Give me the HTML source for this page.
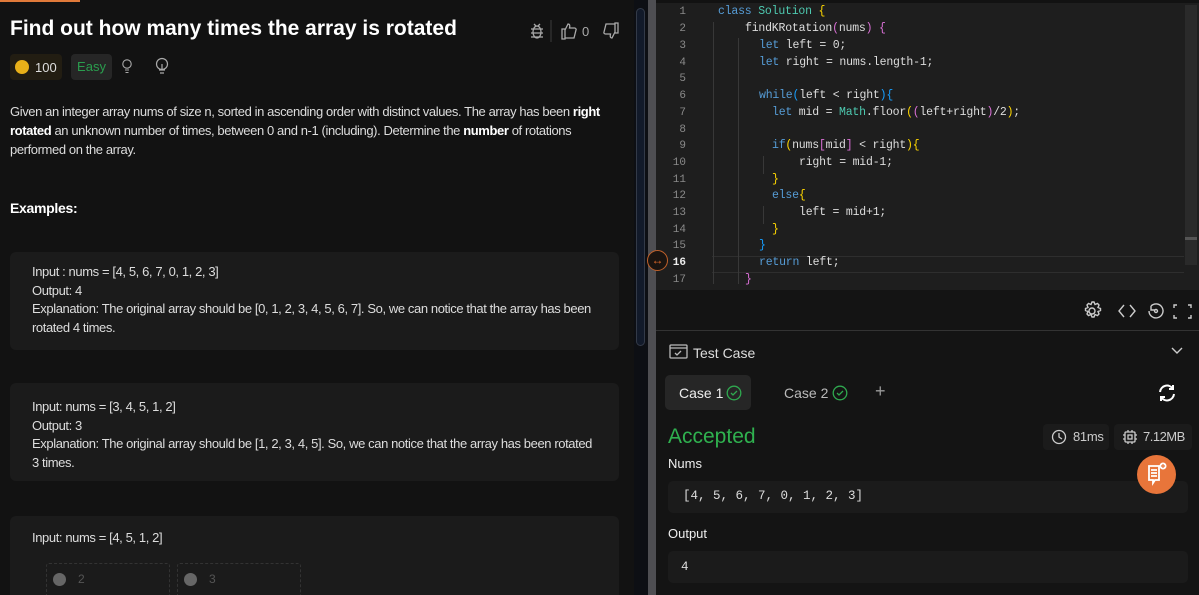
<!DOCTYPE html>
<html><head><meta charset="utf-8"><style>
*{margin:0;padding:0;box-sizing:border-box}
html,body{width:1199px;height:595px;overflow:hidden}
body{background:#121212;font-family:"Liberation Sans",sans-serif;color:#e6e6e6;position:relative}
.a{position:absolute}
.mono{font-family:"Liberation Mono",monospace}
.card{position:absolute;left:10px;width:609px;background:#1b1b1b;border-radius:6px;font-size:13px;line-height:18.5px;color:#ddd;padding-left:22px;padding-right:25px;letter-spacing:-0.4px}
.ln{position:absolute;left:656px;width:30px;text-align:right;font-family:"Liberation Mono",monospace;font-size:11px;color:#8a8a8a}
.cl{position:absolute;font-family:"Liberation Mono",monospace;font-size:11.5px;color:#ddd;white-space:pre;letter-spacing:-0.2px}
.k{color:#569cd6}.t{color:#4ec9b0}.y{color:#ffd700}.p{color:#da70d6}.b{color:#179fff}
</style></head><body>
<div class="a" style="left:0;top:0;width:80px;height:2px;background:#e07a3a"></div>
<div class="a" style="left:10px;top:17px;font-size:21px;font-weight:bold;color:#fff">Find out how many times the array is rotated</div>
<svg class="a" style="left:528px;top:20px" width="100" height="22" viewBox="0 0 100 22" fill="none" stroke="#aaa" stroke-width="1.3">
<ellipse cx="9" cy="12" rx="4" ry="6"/><path d="M3 9h12M3 13h12M3 17h12M6 4l2 2M12 4l-2 2"/>
<path d="M23 0v22" stroke="#333"/>
<path d="M34 9h3v10h-3zM37 10l3-6c2 0 2 2 1.5 4h5c1 0 2 1 1.5 2l-2 8h-9"/>
<text x="54" y="16" fill="#aaa" stroke="none" font-size="13" font-family="Liberation Sans">0</text>
<path d="M87 13h3V3h-3zM87 12l-3 6c-2 0-2-2-1.5-4h-5c-1 0-2-1-1.5-2l2-8h9"/>
</svg>
<div class="a" style="left:10px;top:54px;width:52px;height:26px;background:#221d12;border-radius:4px"></div>
<div class="a" style="left:15px;top:60px;width:14px;height:14px;border-radius:50%;background:#e8b019"></div>
<div class="a" style="left:35px;top:60px;font-size:13px;color:#ddd">100</div>
<div class="a" style="left:71px;top:54px;width:41px;height:26px;background:#262626;border-radius:4px;color:#2a9d4e;font-size:13px;text-align:center;line-height:26px">Easy</div>
<svg class="a" style="left:121px;top:58px" width="12" height="18" fill="none" stroke="#aaa" stroke-width="1.1"><circle cx="6" cy="6" r="4.2"/><path d="M4 12h4M4.5 14.5h3"/></svg>
<svg class="a" style="left:154px;top:57px" width="16" height="20" fill="none" stroke="#aaa" stroke-width="1.2"><circle cx="8" cy="7" r="5.5"/><path d="M5 13h6M6 16h4M8 7v5"/></svg>
<div class="a" style="left:10px;top:102px;width:600px;font-size:13px;line-height:19px;color:#ddd;letter-spacing:-0.4px">Given an integer array nums of size n, sorted in ascending order with distinct values. The array has been <b style="color:#fff">right rotated</b> an unknown number of times, between 0 and n-1 (including). Determine the <b style="color:#fff">number</b> of rotations performed on the array.</div>
<div class="a" style="left:10px;top:200px;font-size:14px;font-weight:bold;color:#fff;letter-spacing:-0.3px">Examples:</div>
<div class="card" style="top:252px;height:98px;padding-top:11px">Input : nums = [4, 5, 6, 7, 0, 1, 2, 3]<br>Output: 4<br>Explanation: The original array should be [0, 1, 2, 3, 4, 5, 6, 7]. So, we can notice that the array has been rotated 4 times.</div>
<div class="card" style="top:383px;height:98px;padding-top:15px">Input: nums = [3, 4, 5, 1, 2]<br>Output: 3<br>Explanation: The original array should be [1, 2, 3, 4, 5]. So, we can notice that the array has been rotated 3 times.</div>
<div class="card" style="top:516px;height:90px;padding-top:13px">Input: nums = [4, 5, 1, 2]</div>
<div class="a" style="left:46px;top:563px;width:124px;height:40px;border:1px dashed #333;border-radius:3px"></div>
<div class="a" style="left:177px;top:563px;width:124px;height:40px;border:1px dashed #333;border-radius:3px"></div>
<div class="a" style="left:53px;top:573px;width:13px;height:13px;border-radius:50%;background:#666"></div>
<div class="a" style="left:78px;top:572px;font-size:12px;color:#555">2</div>
<div class="a" style="left:184px;top:573px;width:13px;height:13px;border-radius:50%;background:#666"></div>
<div class="a" style="left:209px;top:572px;font-size:12px;color:#555">3</div>
<div class="a" style="left:634px;top:0;width:14px;height:595px;background:#0d0f14"></div>
<div class="a" style="left:636px;top:8px;width:9px;height:338px;background:#121a2a;border:1px solid #333a48;border-radius:5px"></div>
<div class="a" style="left:648px;top:0;width:8px;height:595px;background:#4e4e52"></div>
<div class="a" style="left:656px;top:0;width:543px;height:290px;background:#1e1e1e"></div>
<div class="a" style="left:656px;top:0;width:543px;height:3px;background:#121212"></div>
<div class="a" style="left:1185px;top:5px;width:12px;height:260px;background:#2a2a2a"></div>
<div class="a" style="left:1185px;top:237px;width:12px;height:3px;background:#555"></div>
<div class="a" style="left:712px;top:256px;width:472px;height:17px;border-top:1px solid #2e2e2e;border-bottom:1px solid #2e2e2e"></div>
<div class="a" style="left:713px;top:22px;width:1px;height:262px;background:#383838"></div>
<div class="a" style="left:738px;top:38px;width:1px;height:246px;background:#383838"></div>
<div class="a" style="left:763px;top:156px;width:1px;height:18px;background:#383838"></div>
<div class="a" style="left:763px;top:206px;width:1px;height:18px;background:#383838"></div>
<div class="a" style="left:647px;top:250px;width:21px;height:21px;border-radius:50%;background:#1a1410;border:1px solid #c0602a;color:#e06a2a;font-size:12px;text-align:center;line-height:18px">↔</div>
<div class="ln" style="top:6px">1</div><div class="ln" style="top:23px">2</div><div class="ln" style="top:40px">3</div><div class="ln" style="top:57px">4</div><div class="ln" style="top:73px">5</div><div class="ln" style="top:90px">6</div><div class="ln" style="top:107px">7</div><div class="ln" style="top:124px">8</div><div class="ln" style="top:140px">9</div><div class="ln" style="top:157px">10</div><div class="ln" style="top:174px">11</div><div class="ln" style="top:190px">12</div><div class="ln" style="top:207px">13</div><div class="ln" style="top:224px">14</div><div class="ln" style="top:240px">15</div><div class="ln" style="top:257px;color:#eee;font-weight:bold">16</div><div class="ln" style="top:274px">17</div>
<div class="cl" style="left:718px;top:5px"><span class="k">class</span> <span class="t">Solution</span> <span class="y">{</span></div>
<div class="cl" style="left:745px;top:22px">findKRotation<span class="p">(</span>nums<span class="p">)</span> <span class="p">{</span></div>
<div class="cl" style="left:759px;top:39px"><span class="k">let</span> left = 0;</div>
<div class="cl" style="left:759px;top:56px"><span class="k">let</span> right = nums.length-1;</div>
<div class="cl" style="left:759px;top:89px"><span class="k">while</span><span class="b">(</span>left &lt; right<span class="b">){</span></div>
<div class="cl" style="left:772px;top:106px"><span class="k">let</span> mid = <span class="t">Math</span>.floor<span class="y">(</span><span class="p">(</span>left+right<span class="p">)</span>/2<span class="y">)</span>;</div>
<div class="cl" style="left:772px;top:139px"><span class="k">if</span><span class="y">(</span>nums<span class="p">[</span>mid<span class="p">]</span> &lt; right<span class="y">){</span></div>
<div class="cl" style="left:799px;top:156px">right = mid-1;</div>
<div class="cl" style="left:772px;top:173px"><span class="y">}</span></div>
<div class="cl" style="left:772px;top:189px"><span class="k">else</span><span class="y">{</span></div>
<div class="cl" style="left:799px;top:206px">left = mid+1;</div>
<div class="cl" style="left:772px;top:223px"><span class="y">}</span></div>
<div class="cl" style="left:759px;top:239px"><span class="b">}</span></div>
<div class="cl" style="left:759px;top:256px"><span class="k">return</span> left;</div>
<div class="cl" style="left:745px;top:273px"><span class="p">}</span></div>
<div class="a" style="left:656px;top:290px;width:543px;height:305px;background:#141414"></div>
<svg class="a" style="left:1080px;top:297px" width="115" height="28" fill="none" stroke="#ccc" stroke-width="1.4">
<circle cx="12" cy="14" r="3"/><path d="M12 5l2 0 1 2.5 2.5-1 1.5 1.5-1 2.5 2.5 1v2l-2.5 1 1 2.5-1.5 1.5-2.5-1-1 2.5h-2l-1-2.5-2.5 1-1.5-1.5 1-2.5-2.5-1v-2l2.5-1-1-2.5 1.5-1.5 2.5 1z"/>
<path d="M44 8l-5 6 5 6M50 8l5 6-5 6"/>
<path d="M71 9a7 7 0 1 1-2 5M71 9v4h4"/><circle cx="76" cy="14" r="1.5"/>
<path d="M94 11V8h3M108 8h3v3M111 18v3h-3M97 21h-3v-3"/>
</svg>
<div class="a" style="left:656px;top:330px;width:543px;height:1px;background:#333"></div>
<svg class="a" style="left:669px;top:344px" width="20" height="16" fill="none" stroke="#bbb" stroke-width="1.3"><rect x="1" y="1" width="17" height="13" rx="1"/><path d="M1 4h17M6 9l2 2 4-4"/></svg>
<div class="a" style="left:693px;top:345px;font-size:14px;color:#ddd">Test Case</div>
<svg class="a" style="left:1170px;top:346px" width="14" height="10" fill="none" stroke="#ccc" stroke-width="1.4"><path d="M2 2l5 5 5-5"/></svg>
<div class="a" style="left:665px;top:375px;width:86px;height:35px;background:#262626;border-radius:5px"></div>
<div class="a" style="left:679px;top:385px;font-size:14px;color:#eee">Case 1</div>
<svg class="a" style="left:726px;top:385px" width="16" height="16" fill="none" stroke="#2fa84f" stroke-width="1.3"><circle cx="8" cy="8" r="6.8"/><path d="M5 8l2 2 4-4"/></svg>
<div class="a" style="left:784px;top:385px;font-size:14px;color:#bbb">Case 2</div>
<svg class="a" style="left:832px;top:385px" width="16" height="16" fill="none" stroke="#2fa84f" stroke-width="1.3"><circle cx="8" cy="8" r="6.8"/><path d="M5 8l2 2 4-4"/></svg>
<div class="a" style="left:875px;top:381px;font-size:18px;color:#999">+</div>
<svg class="a" style="left:1156px;top:382px" width="22" height="22" fill="none" stroke="#fff" stroke-width="2"><path d="M4 10a7 7 0 0 1 13-3M18 12a7 7 0 0 1-13 3M17 3v4h-4M5 19v-4h4"/></svg>
<div class="a" style="left:668px;top:425px;font-size:21px;color:#2fb14f">Accepted</div>
<div class="a" style="left:1043px;top:424px;width:66px;height:26px;background:#1b1b1b;border-radius:4px"></div>
<svg class="a" style="left:1051px;top:429px" width="16" height="16" fill="none" stroke="#ccc" stroke-width="1.3"><circle cx="8" cy="8" r="6.5"/><path d="M8 4v4l3 2"/></svg>
<div class="a" style="left:1073px;top:429px;font-size:13px;color:#ccc;letter-spacing:-0.3px">81ms</div>
<div class="a" style="left:1114px;top:424px;width:78px;height:26px;background:#1b1b1b;border-radius:4px"></div>
<svg class="a" style="left:1122px;top:429px" width="16" height="16" fill="none" stroke="#ccc" stroke-width="1.3"><rect x="3" y="3" width="10" height="10" rx="1"/><rect x="6" y="6" width="4" height="4"/><path d="M1 6h2M1 10h2M13 6h2M13 10h2M6 1v2M10 1v2M6 13v2M10 13v2"/></svg>
<div class="a" style="left:1143px;top:429px;font-size:13px;color:#ccc;letter-spacing:-0.5px">7.12MB</div>
<div class="a" style="left:668px;top:456px;font-size:13px;color:#eee">Nums</div>
<div class="a" style="left:668px;top:481px;width:520px;height:32px;background:#1b1b1b;border-radius:5px"></div>
<div class="a mono" style="left:683px;top:489px;font-size:12.5px;color:#ddd">[4, 5, 6, 7, 0, 1, 2, 3]</div>
<div class="a" style="left:668px;top:526px;font-size:13px;color:#eee">Output</div>
<div class="a" style="left:668px;top:551px;width:520px;height:32px;background:#1b1b1b;border-radius:5px"></div>
<div class="a mono" style="left:681px;top:560px;font-size:12.5px;color:#ddd">4</div>
<div class="a" style="left:1137px;top:455px;width:39px;height:39px;border-radius:50%;background:#e8753a"></div>
<svg class="a" style="left:1145px;top:461px" width="24" height="26" fill="none" stroke="#fff" stroke-width="1.8"><path d="M4 5h10v14h-4l-2 3v-3H4z"/><path d="M6 9h6M6 12h6M6 15h6"/><circle cx="18" cy="5" r="3.5" fill="#fff" stroke="none"/><path d="M18 3v4M16 5h4" stroke="#e8753a" stroke-width="1.2"/></svg>
</body></html>
